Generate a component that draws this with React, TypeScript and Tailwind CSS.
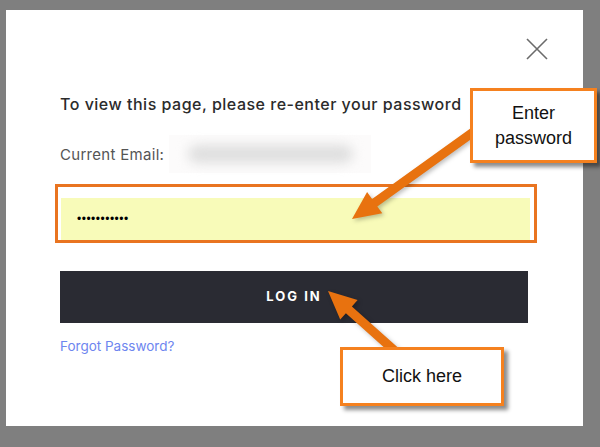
import React from "react";

const sans = { fontFamily: "Inter, 'Noto Sans', sans-serif" };

function Callout({ className, children }: { className: string; children: React.ReactNode }) {
  return (
    <div
      className={`absolute bg-white border-[3px] border-[#f5811f] shadow-[4px_4px_4px_rgba(0,0,0,0.45)] flex items-center justify-center text-center text-[18px] leading-[25px] text-[#111] font-['Liberation_Sans',Arial,sans-serif] ${className}`}
    >
      {children}
    </div>
  );
}

export default function App() {
  return (
    <div className="relative w-[600px] h-[447px] overflow-hidden bg-[#7f7f7f] pt-[10px] pl-[6px]" style={sans}>
      {/* modal */}
      <div className="w-[577px] h-[416px] bg-white pl-[54px] pr-[55px] pt-[28px]">
        <div className="flex justify-end -mr-[20px]">
          <svg width="22" height="22" viewBox="0 0 22 22" className="text-[#6b6b6b]">
            <path d="M1 1 L21 21 M21 1 L1 21" stroke="currentColor" strokeWidth="1.6" fill="none" />
          </svg>
        </div>

        <h2 className="mt-[34px] text-[16px] leading-[20px] font-medium tracking-[0.5px] text-[#2b2b2b] whitespace-nowrap">
          To view this page, please re-enter your password
        </h2>

        <div className="mt-[21px] flex items-center h-[38px]">
          <span className="text-[15px] tracking-[0.3px] text-[#555] mt-[3px]">Current Email:</span>
          <div className="ml-[5px] w-[202px] h-[38px] bg-[#fcfbfb] flex items-center justify-center">
            <div className="w-[165px] h-[18px] rounded-full bg-[#dedede] blur-[6px]" />
          </div>
        </div>

        {/* highlighted password field */}
        <div className="mt-[11px] -ml-[5px] w-[482px] h-[59px] border-[3px] border-[#e97420] pt-[11px] pl-[3px] pr-[4px]">
          <div className="h-[42px] bg-[#f8fbb9] flex items-center pl-[16px]">
            <span className="text-[12px] tracking-[0.5px] text-black font-['Liberation_Sans',Arial,sans-serif]">
              •••••••••••
            </span>
          </div>
        </div>

        <button className="mt-[28px] w-[468px] h-[52px] bg-[#2a2b33] text-white text-[13px] font-bold tracking-[2px] flex items-center justify-center">
          LOG IN
        </button>

        <div className="mt-[13px] text-[13.5px] leading-[20px] text-[#6e86ef]">Forgot Password?</div>
      </div>

      {/* arrows */}
      <svg className="absolute inset-0 pointer-events-none drop-shadow-[2px_2px_2px_rgba(0,0,0,0.25)]" width="600" height="447">
        <polygon
          fill="#e8720f"
          points="352,219 382.3,213.3 377.3,206.4 492.6,123.7 487.4,116.3 372.1,199 367.1,192.1"
        />
        <polygon
          fill="#e8720f"
          points="328,291 357.6,300.1 351.9,306.4 408,356.6 402,363.4 345.9,313.2 340.2,319.5"
        />
      </svg>

      <Callout className="left-[470px] top-[88px] w-[127px] h-[75px]">
        Enter
        <br />
        password
      </Callout>
      <Callout className="left-[340px] top-[347px] w-[164px] h-[59px]">Click here</Callout>
    </div>
  );
}
